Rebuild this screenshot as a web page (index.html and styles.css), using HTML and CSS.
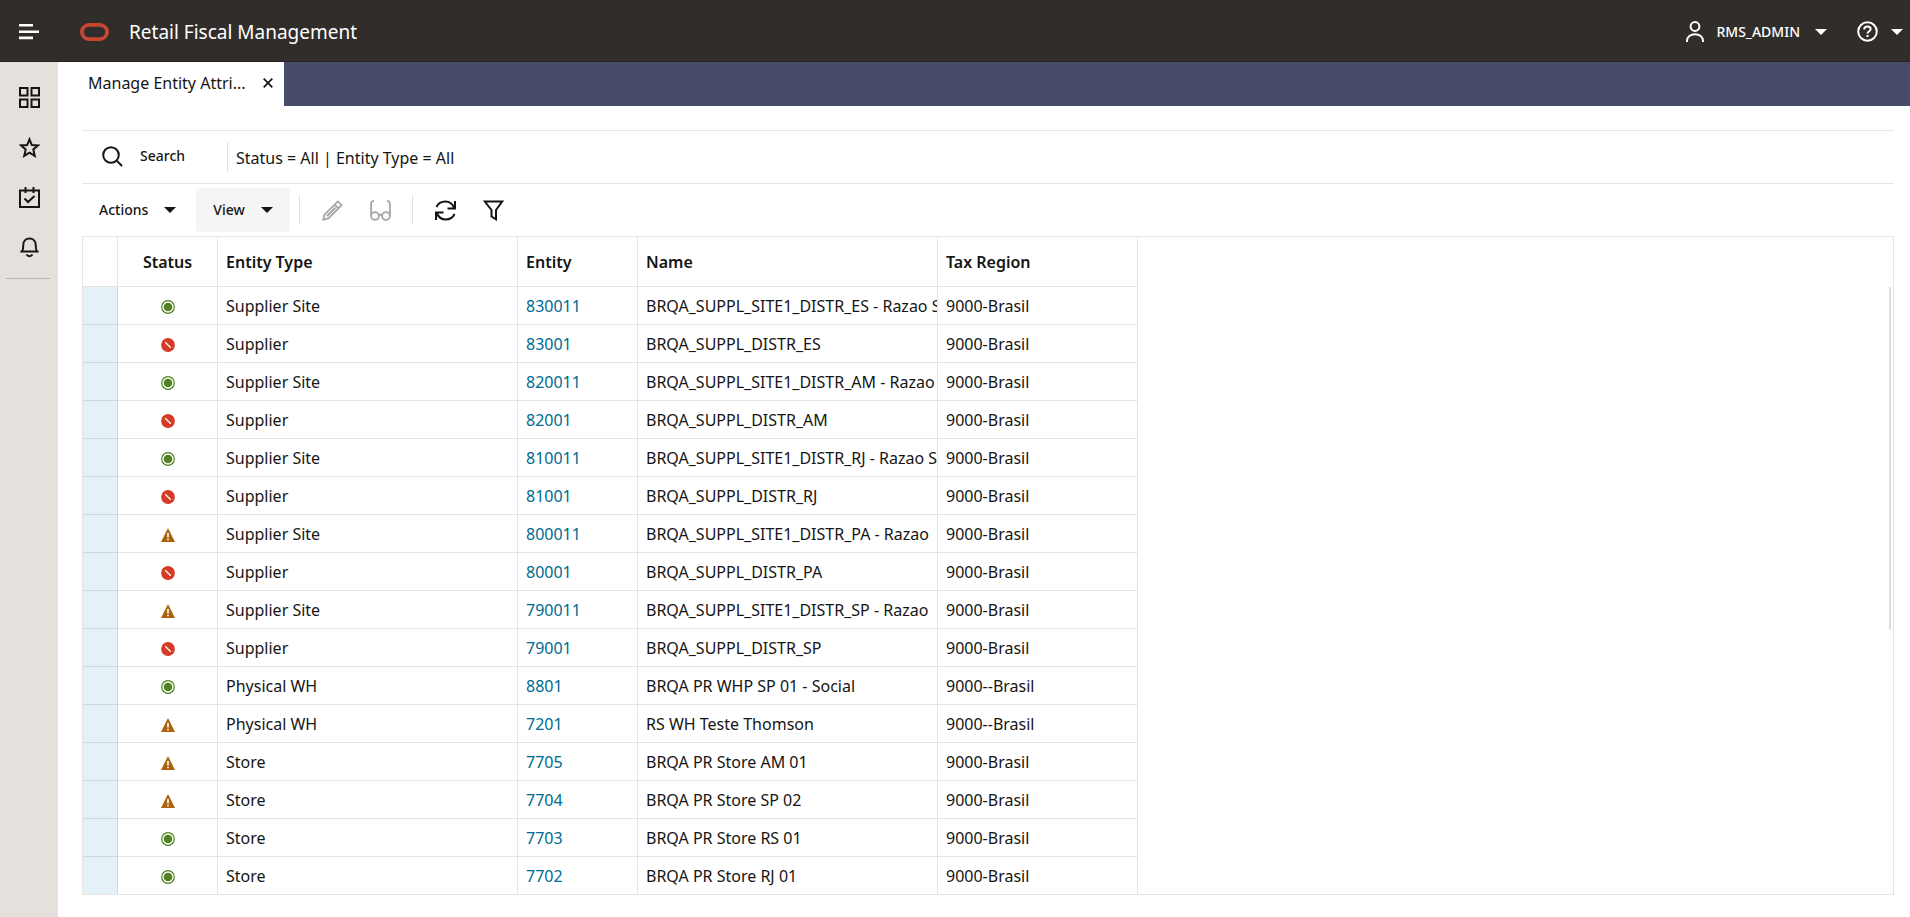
FILE: index.html
```html
<!DOCTYPE html>
<html lang="en">
<head>
<meta charset="utf-8">
<title>Retail Fiscal Management</title>
<link rel="stylesheet" href="styles.css">
</head>
<body>
<svg class="defs" aria-hidden="true">
  <symbol id="caret" viewBox="0 0 12 6"><path d="M0 0h12L6 6z" fill="currentColor"/></symbol>
  <symbol id="ok" viewBox="0 0 14 14"><circle cx="7" cy="7" r="6.3" fill="#fff" stroke="#508223" stroke-width="1.2"/><circle cx="7" cy="7" r="4.3" fill="#508223"/></symbol>
  <symbol id="no" viewBox="0 0 14 14"><circle cx="7" cy="7" r="6.9" fill="#d63b25"/><path d="M4.2 4.2l5.6 5.6" stroke="#fff" stroke-width="1.3"/></symbol>
  <symbol id="warn" viewBox="0 0 14 14"><path d="M7 0l7 14H0z" fill="#ac630c"/><path d="M6.2 5h1.6v4.6H6.2zM6.2 10.8h1.6v1.5H6.2z" fill="#fff"/></symbol>
</svg>

<header class="header">
  <button class="icon-btn menu-btn" aria-label="Menu">
    <svg width="20" height="16" viewBox="0 0 20 16" fill="currentColor"><path d="M0 0h14v2.6H0zM0 6.4h20V9H0zM0 12.6h14v2.6H0z"/></svg>
  </button>
  <svg class="logo" width="29" height="18" viewBox="0 0 29 18" fill="none" stroke="#c74634" stroke-width="3.8"><rect x="1.9" y="1.9" width="25.2" height="14.2" rx="7.1"/></svg>
  <h1 class="title">Retail Fiscal Management</h1>
  <button class="user-btn">
    <svg width="18" height="21" viewBox="0 0 18 21" fill="none" stroke="currentColor" stroke-width="2"><circle cx="9" cy="5.5" r="4.4"/><path d="M1 21v-1c0-4 3.5-6.8 8-6.8s8 2.8 8 6.8v1"/></svg>
    <span class="user-name">RMS_ADMIN</span>
    <svg width="12" height="6"><use href="#caret"/></svg>
  </button>
  <button class="help-btn" aria-label="Help">
    <svg width="21" height="21" viewBox="0 0 21 21" fill="none" stroke="currentColor" stroke-width="2"><circle cx="10.500" cy="10.500" r="9.3"/><path d="M7.300 8.600V8c0-1.500 1.300-2.500 3.200-2.500s3.200 1 3.200 2.500c0 2.200-3.200 2.200-3.200 4.600"/><path d="M10.500 13.900v2.200"/></svg>
    <svg width="12" height="6"><use href="#caret"/></svg>
  </button>
</header>

<div class="shell">
  <nav class="sidebar" aria-label="Main">
    <button class="icon-btn nav-btn" aria-label="Applications">
      <svg width="21" height="21" viewBox="0 0 21 21" fill="none" stroke="currentColor" stroke-width="2"><path d="M1 1h7.500v7.500H1zM12.500 1H20v7.500h-7.500zM1 12.500h7.500V20H1zM12.500 12.500H20V20h-7.500z"/></svg>
    </button>
    <button class="icon-btn nav-btn" aria-label="Favorites">
      <svg width="21" height="21" viewBox="0 0 21 21" fill="none" stroke="currentColor" stroke-width="2"><path d="M10.500 2.300l2.300 5.700 6.200.4-4.700 4 1.500 6.500-5.300-3.300-5.300 3.300 1.500-6.500-4.700-4 6.200-.4z"/></svg>
    </button>
    <button class="icon-btn nav-btn" aria-label="Tasks">
      <svg width="21" height="21" viewBox="0 0 21 21" fill="none" stroke="currentColor" stroke-width="2"><path d="M1 3.500h19V20H1zM6.500 0v6M14.500 0v6M5.500 11.500l3.500 3.500 6.500-6"/></svg>
    </button>
    <button class="icon-btn nav-btn" aria-label="Notifications">
      <svg width="21" height="21" viewBox="0 0 21 21" fill="none" stroke="currentColor" stroke-width="2"><path d="M3 14.500c1.300-1.800 1.300-3.500 1.300-6.500C4.300 4 7 1.500 10.500 1.500S16.700 4 16.700 8c0 3 0 4.700 1.300 6.500zM1.500 14.500h18M7.500 17.500c.8 1.200 1.800 1.700 3 1.700s2.200-.5 3-1.700"/></svg>
    </button>
  </nav>

  <div class="content">
    <div class="tabs">
      <div class="tab">
        <span class="tab-label">Manage Entity Attri...</span>
        <button class="icon-btn" aria-label="Close tab"><svg width="10" height="10" viewBox="0 0 10 10" stroke="currentColor" stroke-width="1.7"><path d="M.7.7l8.600 8.600M9.300.7L.7 9.300"/></svg></button>
      </div>
    </div>

    <main class="main">
      <div class="search-row">
        <button class="search-btn">
          <svg width="21" height="21" viewBox="0 0 21 21" fill="none" stroke="currentColor" stroke-width="2"><circle cx="9" cy="9" r="7.800"/><path d="M14.500 14.500l5.500 5.500"/></svg>
          <span>Search</span>
        </button>
        <p class="criteria">Status = All | Entity Type = All</p>
      </div>

      <div class="toolbar">
        <button class="menu">Actions <svg width="12" height="6"><use href="#caret"/></svg></button>
        <button class="menu menu-active">View <svg width="12" height="6"><use href="#caret"/></svg></button>
        <div class="tool-group">
          <button class="icon-btn" disabled aria-label="Edit"><svg width="21" height="21" viewBox="0 0 21 21" fill="none" stroke="currentColor" stroke-width="1.800"><path d="M1.300 19.700l1.200-5L15.800 1.400l3.800 3.800L6.300 18.500zM12.700 4.500l3.800 3.800M5 16l8.500-8.500"/></svg></button>
          <button class="icon-btn" disabled aria-label="View"><svg width="21" height="21" viewBox="0 0 21 21" fill="none" stroke="currentColor" stroke-width="1.800"><circle cx="5" cy="16" r="3.900"/><circle cx="16" cy="16" r="3.900"/><path d="M8.900 15.500c1-.9 2.200-.9 3.200 0M1.100 16V4c0-1.800 1-3 3-3.400M19.900 16V4c0-1.800-1-3-3-3.400"/></svg></button>
        </div>
        <div class="tool-group">
          <button class="icon-btn" aria-label="Refresh"><svg width="21" height="21" viewBox="0 0 21 21" fill="none" stroke="currentColor" stroke-width="2"><path d="M1.500 7C3 3.500 6.300 1.500 10.300 1.500c4 0 7 2 8.700 6M20 1v7.500h-7.500M19.500 14c-1.500 3.500-4.800 5.500-8.800 5.500s-7-2-8.700-6M1 20v-7.500h7.500"/></svg></button>
          <button class="icon-btn" aria-label="Filter"><svg width="21" height="21" viewBox="0 0 21 21" fill="none" stroke="currentColor" stroke-width="2"><path d="M1.800 1.500h17.400L13 10v9.300l-4.500-2.800V10z"/></svg></button>
        </div>
      </div>

      <div class="grid">
        <table class="table">
          <colgroup><col class="c-row"><col class="c-status"><col class="c-type"><col class="c-entity"><col class="c-name"><col class="c-tax"></colgroup>
          <thead><tr><th></th><th class="status">Status</th><th>Entity Type</th><th>Entity</th><th>Name</th><th>Tax Region</th></tr></thead>
          <tbody>
            <tr><td></td><td class="status"><svg class="mark"><use href="#ok"/></svg></td><td>Supplier Site</td><td><a href="#">830011</a></td><td>BRQA_SUPPL_SITE1_DISTR_ES - Razao S</td><td>9000-Brasil</td></tr>
            <tr><td></td><td class="status"><svg class="mark"><use href="#no"/></svg></td><td>Supplier</td><td><a href="#">83001</a></td><td>BRQA_SUPPL_DISTR_ES</td><td>9000-Brasil</td></tr>
            <tr><td></td><td class="status"><svg class="mark"><use href="#ok"/></svg></td><td>Supplier Site</td><td><a href="#">820011</a></td><td>BRQA_SUPPL_SITE1_DISTR_AM - Razao</td><td>9000-Brasil</td></tr>
            <tr><td></td><td class="status"><svg class="mark"><use href="#no"/></svg></td><td>Supplier</td><td><a href="#">82001</a></td><td>BRQA_SUPPL_DISTR_AM</td><td>9000-Brasil</td></tr>
            <tr><td></td><td class="status"><svg class="mark"><use href="#ok"/></svg></td><td>Supplier Site</td><td><a href="#">810011</a></td><td>BRQA_SUPPL_SITE1_DISTR_RJ - Razao S</td><td>9000-Brasil</td></tr>
            <tr><td></td><td class="status"><svg class="mark"><use href="#no"/></svg></td><td>Supplier</td><td><a href="#">81001</a></td><td>BRQA_SUPPL_DISTR_RJ</td><td>9000-Brasil</td></tr>
            <tr><td></td><td class="status"><svg class="mark"><use href="#warn"/></svg></td><td>Supplier Site</td><td><a href="#">800011</a></td><td>BRQA_SUPPL_SITE1_DISTR_PA - Razao</td><td>9000-Brasil</td></tr>
            <tr><td></td><td class="status"><svg class="mark"><use href="#no"/></svg></td><td>Supplier</td><td><a href="#">80001</a></td><td>BRQA_SUPPL_DISTR_PA</td><td>9000-Brasil</td></tr>
            <tr><td></td><td class="status"><svg class="mark"><use href="#warn"/></svg></td><td>Supplier Site</td><td><a href="#">790011</a></td><td>BRQA_SUPPL_SITE1_DISTR_SP - Razao</td><td>9000-Brasil</td></tr>
            <tr><td></td><td class="status"><svg class="mark"><use href="#no"/></svg></td><td>Supplier</td><td><a href="#">79001</a></td><td>BRQA_SUPPL_DISTR_SP</td><td>9000-Brasil</td></tr>
            <tr><td></td><td class="status"><svg class="mark"><use href="#ok"/></svg></td><td>Physical WH</td><td><a href="#">8801</a></td><td>BRQA PR WHP SP 01 - Social</td><td>9000--Brasil</td></tr>
            <tr><td></td><td class="status"><svg class="mark"><use href="#warn"/></svg></td><td>Physical WH</td><td><a href="#">7201</a></td><td>RS WH Teste Thomson</td><td>9000--Brasil</td></tr>
            <tr><td></td><td class="status"><svg class="mark"><use href="#warn"/></svg></td><td>Store</td><td><a href="#">7705</a></td><td>BRQA PR Store AM 01</td><td>9000-Brasil</td></tr>
            <tr><td></td><td class="status"><svg class="mark"><use href="#warn"/></svg></td><td>Store</td><td><a href="#">7704</a></td><td>BRQA PR Store SP 02</td><td>9000-Brasil</td></tr>
            <tr><td></td><td class="status"><svg class="mark"><use href="#ok"/></svg></td><td>Store</td><td><a href="#">7703</a></td><td>BRQA PR Store RS 01</td><td>9000-Brasil</td></tr>
            <tr><td></td><td class="status"><svg class="mark"><use href="#ok"/></svg></td><td>Store</td><td><a href="#">7702</a></td><td>BRQA PR Store RJ 01</td><td>9000-Brasil</td></tr>
          </tbody>
        </table>
        <div class="scroll-thumb"></div>
      </div>
    </main>
  </div>
</div>
</body>
</html>
```

FILE: styles.css
```css
* { box-sizing: border-box; }

body {
  margin: 0;
  min-height: 100vh;
  display: flex;
  flex-direction: column;
  font: 16px/20px "Noto Sans", "Open Sans", sans-serif;
  color: #161513;
  background: #fff;
}

svg { display: block; flex: none; }
.defs { position: absolute; width: 0; height: 0; }

button {
  display: flex;
  align-items: center;
  padding: 0;
  border: 0;
  background: none;
  color: inherit;
  font: inherit;
}

.icon-btn { justify-content: center; }

/* Header */
.header {
  display: flex;
  align-items: center;
  height: 62px;
  padding: 2px 7px 0 0;
  background: #312d2a;
  border-bottom: 1px solid #26221f;
  color: #fff;
}
.menu-btn { width: 58px; height: 60px; }
.logo { margin-left: 22px; }
.title {
  flex: 1;
  margin: 0 0 0 20px;
  font-size: 19px;
  line-height: 28px;
  font-weight: 400;
}
.user-btn { gap: 12px; margin-right: 30px; }
.user-name { font-size: 14px; font-weight: 500; margin-right: 3px; }
.help-btn { gap: 13px; }

/* Shell */
.shell { flex: 1; display: flex; }
.sidebar {
  width: 58px;
  flex: none;
  padding: 10px 6px 0;
  background: #e4e1dd;
}
.nav-btn { width: 100%; height: 50px; }
.sidebar::after {
  content: "";
  display: block;
  width: 44px;
  margin-top: 6px;
  border-top: 1px solid #bcb6b1;
}
.content { flex: 1; min-width: 0; display: flex; flex-direction: column; }

.tabs { display: flex; height: 44px; background: #474c69; }
.tab {
  display: flex;
  align-items: center;
  justify-content: space-between;
  width: 226px;
  padding: 0 11px 3px 30px;
  background: #fff;
}
.tab-label { white-space: nowrap; }

.main {
  flex: 1;
  display: flex;
  flex-direction: column;
  padding: 24px 16px 22px 24px;
}

/* Search summary */
.search-row {
  display: flex;
  align-items: center;
  height: 54px;
  border-top: 1px solid #e6e6e6;
  border-bottom: 1px solid #e6e6e6;
}
.search-btn {
  gap: 17px;
  width: 146px;
  height: 30px;
  padding: 0 0 2px 20px;
  border-right: 1px solid #e0e0e0;
  font-size: 14px;
  font-weight: 500;
}
.criteria { margin: 0; padding: 2px 0 0 8px; }

/* Toolbar */
.toolbar { display: flex; align-items: center; height: 52px; }
.menu {
  gap: 16px;
  height: 44px;
  padding: 0 17px;
  border-radius: 4px;
  font-size: 14px;
  font-weight: 500;
}
.menu-active { margin-left: 3px; background: #f5f5f5; }
.tool-group {
  display: flex;
  align-items: center;
  gap: 27px;
  height: 30px;
  margin-left: 9px;
  padding: 0 12px 0 22px;
  border-left: 1px solid #e0e0e0;
}
.icon-btn:disabled { color: #a8a5a2; }

/* Grid */
.grid {
  position: relative;
  flex: 1;
  border: 1px solid #e4e4e4;
}
.table {
  width: 1055px;
  table-layout: fixed;
  border-spacing: 0;
}
.c-row { width: 35px; }
.c-status { width: 100px; }
.c-type, .c-name { width: 300px; }
.c-entity { width: 120px; }
.c-tax { width: 200px; }

.table th, .table td {
  height: 38px;
  padding: 0 0 0 8px;
  border-right: 1px solid #e4e4e4;
  border-bottom: 1px solid #e4e4e4;
  overflow: hidden;
  white-space: nowrap;
  text-align: left;
}
.table th { height: 50px; font-weight: 600; }
.table .status { padding: 0; text-align: center; }
.table td:first-child { background: #e4f1f7; border-color: #c9d8e1; }
.table tbody tr:last-child td { height: 37px; border-bottom: 0; }
.table a { color: #006b8f; text-decoration: none; }
.mark { width: 14px; height: 14px; margin: 2px auto 0; }

.scroll-thumb {
  position: absolute;
  top: 50px;
  right: 2px;
  width: 2px;
  height: 343px;
  background: #dfdfdf;
}
```
